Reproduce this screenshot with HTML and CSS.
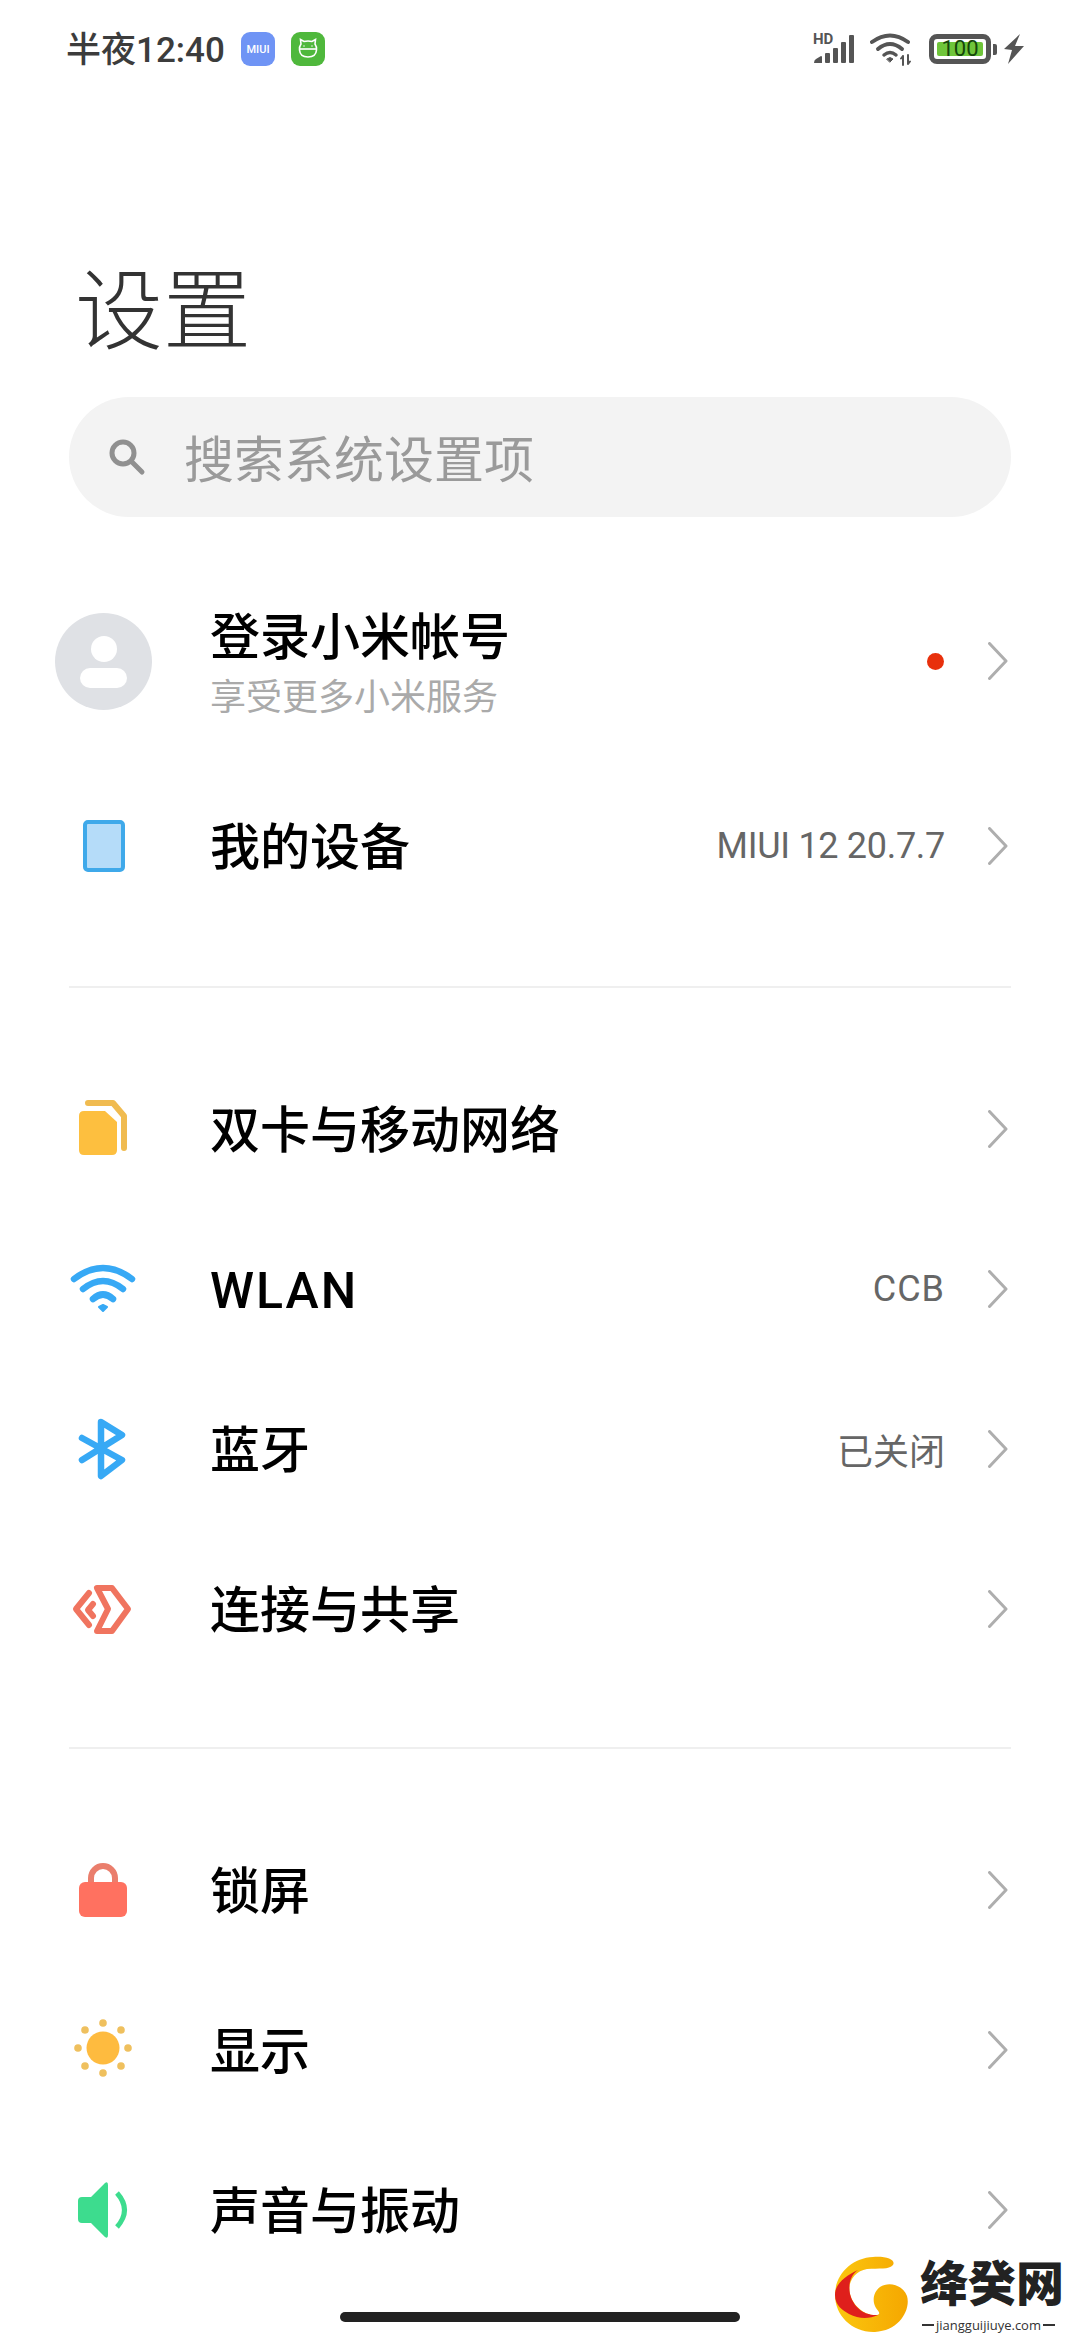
FILE: index.html
```html
<!DOCTYPE html>
<html lang="zh-CN">
<head>
    <meta charset="UTF-8">
    <meta name="viewport" content="width=device-width, initial-scale=1.0">
    <title>设置</title>
    <link rel="stylesheet" href="styles.css">
</head>
<body>
    <div class="screen">
        <div class="status-bar">
            <div class="status-left">
                <span class="clock">半夜12:40</span>
                <span class="badge badge-miui">MIUI</span>
                <span class="badge badge-cat">
                    <svg width="34" height="34" viewBox="0 0 34 34" fill="none" stroke="#fff" stroke-width="1.6">
                        <path d="M10 12 L9.500 7.500 L13 9.500 Q17 8.500 21 9.500 L24.500 7.500 L24 12 Q26 15 25.500 18 Q25 25 17 25 Q9 25 8.500 18 Q8 15 10 12 Z"/>
                        <path d="M8.500 17 H25.500"/>
                        <path d="M13 13.500 V14.500 M21 13.500 V14.500"/>
                    </svg>
                </span>
            </div>
            <div class="status-right">
                <svg class="signal" width="42" height="38" viewBox="0 -6 42 38" fill="#555">
                    <text x="0" y="11" class="hd">HD</text>
                    <path d="M1 30 Q1 27 3 26 L8 23 Q9 23 9 24 V30 Z"/>
                    <rect x="12" y="20" width="5" height="10" rx="1"/>
                    <rect x="20" y="15" width="5" height="15" rx="1"/>
                    <rect x="28" y="9" width="5" height="21" rx="1"/>
                    <rect x="36" y="2" width="5" height="28" rx="1"/>
                </svg>
                <svg class="wifi" width="42" height="34" viewBox="0 0 42 34" fill="none" stroke="#555" stroke-width="4" stroke-linecap="round">
                    <path d="M2 10 Q20 -3 38 10"/>
                    <path d="M8 17 Q20 7 32 17"/>
                    <path d="M14 23 Q20 18 26 23" stroke-width="3.500"/>
                    <path d="M17 27 L20 25.500 L23 27 L20 30 Z" fill="#555" stroke-width="1"/>
                    <path d="M33 24 V33 M31 26.500 L33 24 M38 23 V32 M38 32 L40 29.500" stroke-width="2"/>
                </svg>
                <div class="battery">
                    <div class="battery-body">
                        <span class="battery-fill">100</span>
                    </div>
                    <span class="battery-cap"></span>
                </div>
                <svg class="bolt" width="20" height="30" viewBox="0 0 20 30" fill="#555">
                    <path d="M16 0 L0 15 L8 16 L4 30 L20 12 L11 12 Z"/>
                </svg>
            </div>
        </div>

        <h1 class="page-title">设置</h1>

        <div class="search-box">
            <svg class="search-icon" width="40" height="40" viewBox="0 0 40 40" fill="none" stroke="#909090" stroke-width="5" stroke-linecap="round">
                <circle cx="16" cy="16" r="11"/>
                <path d="M25 25 L35 35"/>
            </svg>
            <span class="search-text">搜索系统设置项</span>
        </div>

        <div class="row row-account">
            <div class="avatar">
                <span class="avatar-head"></span>
                <span class="avatar-body"></span>
            </div>
            <div class="row-main">
                <div class="row-title">登录小米帐号</div>
                <div class="row-sub">享受更多小米服务</div>
            </div>
            <span class="red-dot"></span>
            <svg class="chevron" width="20" height="38" viewBox="0 0 20 38"><path d="M1.500 1.500 L18 19 L1.500 36.500"/></svg>
        </div>

        <div class="row row-device">
            <div class="icon-slot"><span class="device-icon"></span></div>
            <div class="row-main"><div class="row-title">我的设备</div></div>
            <span class="row-value value-version">MIUI 12 20.7.7</span>
            <svg class="chevron" width="20" height="38" viewBox="0 0 20 38"><path d="M1.500 1.500 L18 19 L1.500 36.500"/></svg>
        </div>

        <div class="divider"></div>

        <div class="row">
            <div class="icon-slot">
                <svg width="97" height="80" viewBox="0 0 97 80">
                    <path d="M29 22 H50 L62 33 V61 Q62 66 57 66 H29 Q24 66 24 61 V27 Q24 22 29 22 Z" fill="#fdbf3f"/>
                    <path d="M33 14 H58 L69 27 V59" fill="none" stroke="#f0bb50" stroke-width="6" stroke-linecap="round" stroke-linejoin="round"/>
                </svg>
            </div>
            <div class="row-main"><div class="row-title">双卡与移动网络</div></div>
            <svg class="chevron" width="20" height="38" viewBox="0 0 20 38"><path d="M1.500 1.500 L18 19 L1.500 36.500"/></svg>
        </div>

        <div class="row">
            <div class="icon-slot">
                <svg width="97" height="80" viewBox="0 0 97 80" fill="none" stroke="#37a9f5" stroke-width="6.500" stroke-linecap="round">
                    <path d="M19 30 Q48 8 77 30"/>
                    <path d="M28 40 Q48 24 68 40"/>
                    <path d="M38 50 Q48 41 58 50"/>
                    <path d="M44 58 L48 56 L52 58 L48 62 Z" fill="#37a9f5" stroke-width="2" stroke-linejoin="round"/>
                </svg>
            </div>
            <div class="row-main"><div class="row-title title-latin">WLAN</div></div>
            <span class="row-value value-latin">CCB</span>
            <svg class="chevron" width="20" height="38" viewBox="0 0 20 38"><path d="M1.500 1.500 L18 19 L1.500 36.500"/></svg>
        </div>

        <div class="row">
            <div class="icon-slot">
                <svg width="97" height="80" viewBox="0 0 97 80" fill="none" stroke="#37a9f5" stroke-width="6.500" stroke-linecap="round" stroke-linejoin="round">
                    <path d="M27 29 L67 51 L46 67 V13 L67 26 L27 51"/>
                </svg>
            </div>
            <div class="row-main"><div class="row-title">蓝牙</div></div>
            <span class="row-value">已关闭</span>
            <svg class="chevron" width="20" height="38" viewBox="0 0 20 38"><path d="M1.500 1.500 L18 19 L1.500 36.500"/></svg>
        </div>

        <div class="row">
            <div class="icon-slot">
                <svg width="97" height="80" viewBox="0 0 97 80" fill="none" stroke="#f0745f" stroke-width="6" stroke-linecap="round" stroke-linejoin="round">
                    <path d="M42 19 H57 L73 40 L57 62 H42 L53 40 Z"/>
                    <path d="M34 24 L21 40 L34 56"/>
                    <path d="M38 35 L33 41 L38 47"/>
                </svg>
            </div>
            <div class="row-main"><div class="row-title">连接与共享</div></div>
            <svg class="chevron" width="20" height="38" viewBox="0 0 20 38"><path d="M1.500 1.500 L18 19 L1.500 36.500"/></svg>
        </div>

        <div class="divider divider-lower"></div>

        <div class="row">
            <div class="icon-slot">
                <svg width="97" height="80" viewBox="0 0 97 80">
                    <path d="M36 34 V28 a12 12 0 0 1 24 0 V34" fill="none" stroke="#ea7e6c" stroke-width="6"/>
                    <rect x="24" y="32" width="48" height="35" rx="6" fill="#ff7160"/>
                </svg>
            </div>
            <div class="row-main"><div class="row-title">锁屏</div></div>
            <svg class="chevron" width="20" height="38" viewBox="0 0 20 38"><path d="M1.500 1.500 L18 19 L1.500 36.500"/></svg>
        </div>

        <div class="row">
            <div class="icon-slot">
                <svg width="97" height="80" viewBox="0 0 97 80" fill="#efc05e">
                    <circle cx="48" cy="38" r="16.500" fill="#febb3f"/>
                    <circle cx="48" cy="13" r="3.800"/>
                    <circle cx="48" cy="63" r="3.800"/>
                    <circle cx="23" cy="38" r="3.800"/>
                    <circle cx="73" cy="38" r="3.800"/>
                    <circle cx="30" cy="20" r="3.800"/>
                    <circle cx="66" cy="20" r="3.800"/>
                    <circle cx="30" cy="56" r="3.800"/>
                    <circle cx="66" cy="56" r="3.800"/>
                </svg>
            </div>
            <div class="row-main"><div class="row-title">显示</div></div>
            <svg class="chevron" width="20" height="38" viewBox="0 0 20 38"><path d="M1.500 1.500 L18 19 L1.500 36.500"/></svg>
        </div>

        <div class="row">
            <div class="icon-slot">
                <svg width="97" height="80" viewBox="0 0 97 80">
                    <path d="M23 31 Q23 27 27 27 H36 L50 13 Q53 11 53 15 V65 Q53 69 50 67 L36 53 H27 Q23 53 23 49 Z" fill="#3ddc8e"/>
                    <path d="M62 23 Q77 40 62 57" fill="none" stroke="#3ddc8e" stroke-width="5"/>
                </svg>
            </div>
            <div class="row-main"><div class="row-title">声音与振动</div></div>
            <svg class="chevron" width="20" height="38" viewBox="0 0 20 38"><path d="M1.500 1.500 L18 19 L1.500 36.500"/></svg>
        </div>

        <div class="home-bar"></div>

        <div class="watermark">
            <svg width="74" height="77" viewBox="0 0 74 77">
                <defs>
                    <linearGradient id="logoGold" x1="0" y1="0" x2="1" y2="0">
                        <stop offset="0" stop-color="#fbc70f"/>
                        <stop offset="1" stop-color="#f5a700"/>
                    </linearGradient>
                </defs>
                <path d="M38 1 C52 0 61 4 58 9 C54 14 44 12 32 13 C20 15 12 26 15 38 C18 50 30 60 42 59 C46 58 44 56 41 52 C37 46 38 36 45 31 C54 25 68 29 72 40 C76 54 64 75 40 76 C18 77 0 60 0 39 C0 18 17 2 38 1 Z" fill="url(#logoGold)"/>
                <path d="M23 14 C10 20 0 28 0 39 C0 50 8 54 14 58 C24 63 34 63 43 59 C28 60 18 50 15 38 C13 27 16 19 23 14 Z" fill="#df1f1c"/>
            </svg>
            <div class="watermark-text">
                <div class="watermark-name">绛癸网</div>
                <div class="watermark-url"><span class="dash"></span>jiangguijiuye.com<span class="dash"></span></div>
            </div>
        </div>
    </div>
</body>
</html>
```

FILE: styles.css
```css
* {
    box-sizing: border-box;
}
html, body {
    margin: 0;
    padding: 0;
    background: #fff;
}
body {
    font-family: "Roboto", "Noto Sans CJK SC", sans-serif;
    color: #000;
}
.screen {
    position: relative;
    width: 1080px;
    height: 2340px;
    overflow: hidden;
    background: #fff;
}

/* status bar */
.status-bar {
    display: flex;
    justify-content: space-between;
    align-items: center;
    height: 98px;
    padding: 0 56px 0 66px;
}
.status-left {
    display: flex;
    align-items: center;
}
.clock {
    font-size: 35px;
    font-weight: 500;
    color: #3c3c3c;
    width: 175px;
    margin-top: -6px;
}
.badge {
    display: flex;
    align-items: center;
    justify-content: center;
    width: 34px;
    height: 34px;
    border-radius: 9px;
    color: #fff;
}
.badge-miui {
    background: #6f94f5;
    font-size: 11px;
    font-weight: 500;
    margin-right: 16px;
}
.badge-cat {
    background: #4fb83c;
}
.status-right {
    display: flex;
    align-items: center;
}
.hd {
    font-size: 15px;
    font-weight: 700;
}
.signal {
    margin-top: -6px;
    margin-right: 15px;
}
.wifi {
    margin-right: 17px;
}
.battery {
    display: flex;
    align-items: center;
    margin-right: 7px;
}
.battery-body {
    width: 62px;
    height: 30px;
    padding: 3px;
    border: 5px solid #555;
    border-radius: 8px;
}
.battery-fill {
    display: block;
    height: 100%;
    background: #6fc53a;
    border-radius: 2px;
    color: #14470a;
    font-size: 22px;
    line-height: 14px;
    text-align: center;
}
.battery-cap {
    width: 4px;
    height: 11px;
    margin-left: 2px;
    background: #555;
    border-radius: 0 2px 2px 0;
}

/* title + search */
.page-title {
    margin: 146px 0 33px 75px;
    height: 120px;
    font-family: "Noto Sans CJK SC", sans-serif;
    font-size: 88px;
    font-weight: 300;
    line-height: 120px;
    color: #333;
}
.search-box {
    display: flex;
    align-items: center;
    width: 942px;
    height: 120px;
    margin-left: 69px;
    padding-left: 38px;
    background: #f3f3f3;
    border-radius: 60px;
}
.search-icon {
    margin-right: 37px;
}
.search-text {
    font-family: "Noto Sans CJK SC", sans-serif;
    font-size: 50px;
    line-height: 60px;
    margin-bottom: 2px;
    color: #9a9a9a;
}

/* list */
.row {
    display: flex;
    align-items: center;
    height: 160px;
    padding: 0 72px 0 55px;
}
.row-account {
    margin-top: 64px;
}
.row-device {
    margin-top: 25px;
}
.icon-slot {
    display: flex;
    align-items: center;
    justify-content: center;
    width: 97px;
    height: 100%;
}
.row-main {
    flex: 1;
    margin-left: 58px;
    padding-top: 4px;
}
.row-title {
    font-size: 50px;
    font-weight: 500;
    line-height: 62px;
    color: #000;
}
.title-latin {
    letter-spacing: 2px;
}
.row-sub {
    font-family: "Noto Sans CJK SC", sans-serif;
    font-size: 36px;
    line-height: 50px;
    color: #aaa;
}
.row-value {
    margin-right: 43px;
    font-size: 36px;
    color: #666;
}
.value-version {
    letter-spacing: -0.3px;
}
.value-latin {
    letter-spacing: 1px;
}
.chevron {
    fill: none;
    stroke: #aeaeae;
    stroke-width: 3;
    stroke-linecap: round;
    stroke-linejoin: round;
}
.avatar {
    display: flex;
    flex-direction: column;
    align-items: center;
    width: 97px;
    height: 97px;
    padding-top: 23px;
    background: #dfe1e5;
    border-radius: 50%;
}
.avatar-head {
    width: 26px;
    height: 26px;
    background: #fff;
    border-radius: 50%;
}
.avatar-body {
    width: 47px;
    height: 20px;
    margin-top: 6px;
    background: #fff;
    border-radius: 10px;
}
.red-dot {
    width: 17px;
    height: 17px;
    margin-right: 44px;
    background: #e8300c;
    border-radius: 50%;
}
.device-icon {
    width: 42px;
    height: 52px;
    background: #b5dcf9;
    border: 4px solid #3fa9ea;
    border-radius: 5px;
}
.divider {
    height: 2px;
    margin: 60px 69px 0;
    background: #efefef;
}
.divider-lower {
    margin-top: 58px;
}
.divider + .row {
    margin-top: 61px;
}

/* overlays */
.home-bar {
    position: absolute;
    left: 340px;
    top: 2312px;
    width: 400px;
    height: 10px;
    background: #222;
    border-radius: 5px;
}
.watermark {
    position: absolute;
    left: 826px;
    top: 2250px;
    width: 254px;
    height: 90px;
    padding: 6px 0 0 9px;
    display: flex;
    background: #fff;
}
.watermark-text {
    margin-left: 11px;
    margin-top: -11px;
}
.watermark-name {
    font-family: "Noto Sans CJK SC", sans-serif;
    font-size: 48px;
    font-weight: 900;
    line-height: 70px;
    letter-spacing: 0;
    color: #222;
}
.watermark-url {
    display: flex;
    align-items: center;
    height: 18px;
    margin-top: 1px;
    font-family: "Open Sans", sans-serif;
    font-size: 13px;
    line-height: 18px;
    color: #333;
    white-space: nowrap;
}
.dash {
    width: 12px;
    height: 2px;
    margin: 0 2px;
    background: #333;
}
```
